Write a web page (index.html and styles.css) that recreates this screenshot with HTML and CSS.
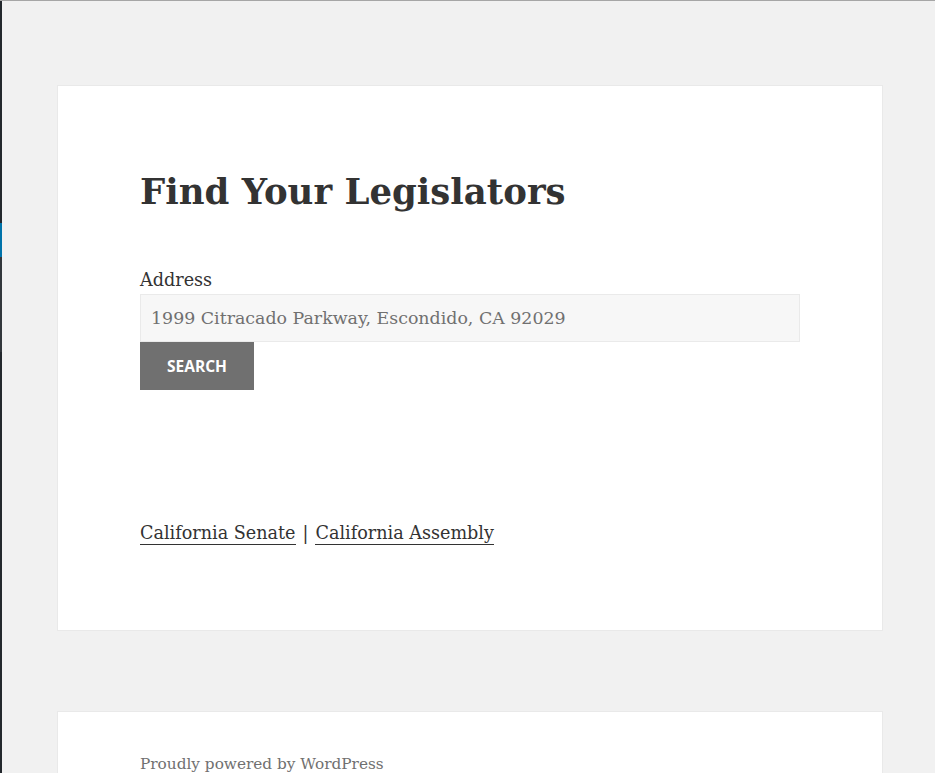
FILE: index.html
```html
<!DOCTYPE html>
<html>
<head>
<meta charset="utf-8">
<link rel="stylesheet" href="styles.css">
</head>
<body>
<div class="topline"></div>
<div class="frame">
  <div class="adminbar">
    <div class="seg-dark1"></div>
    <div class="seg-blue"></div>
    <div class="seg-dark2"></div>
    <div class="seg-dark3"></div>
  </div>
  <div class="main">
    <article class="card">
      <h1 class="title">Find Your Legislators</h1>
      <form class="search-form">
        <label class="label" for="addr">Address</label>
        <input class="addr" id="addr" type="text" placeholder="1999 Citracado Parkway, Escondido, CA 92029">
        <button class="btn" type="button">Search</button>
      </form>
      <p class="links"><a class="link" href="#">California Senate</a><span class="sep">|</span><a class="link" href="#">California Assembly</a></p>
    </article>
    <footer class="card footer">
      <p class="powered">Proudly powered by WordPress</p>
    </footer>
  </div>
</div>
</body>
</html>
```
FILE: styles.css
```css
html, body {
  margin: 0;
  padding: 0;
  height: 100%;
  overflow: hidden;
}
body {
  background: #f1f1f1;
  font-family: "DejaVu Serif", serif;
  color: #333;
}
.topline {
  height: 1px;
  background: #a6a6a6;
}
.frame {
  display: flex;
  min-height: 772px;
}
.adminbar {
  width: 2px;
  display: flex;
  flex-direction: column;
  background: #23282d;
}
.seg-dark1 { height: 222px; background: #23282d; }
.seg-blue { height: 34px; background: #0073aa; }
.seg-dark2 { height: 95px; background: #32373c; }
.seg-dark3 { flex: 1; background: #23282d; }
.main {
  margin-left: 55px;
  padding-top: 84px;
  width: 826px;
}
.card {
  background: #fff;
  border: 1px solid #e9e9e9;
  box-sizing: border-box;
  width: 826px;
  padding: 82px 82px 83px 82px;
}
.title {
  margin: 0;
  font-family: "DejaVu Serif", serif;
  font-weight: 700;
  font-size: 35.5px;
  line-height: 48px;
  color: #333;
}
.search-form {
  margin-top: 50px;
  display: flex;
  flex-direction: column;
  align-items: flex-start;
}
.label {
  font-size: 17.6px;
  line-height: 28px;
  color: #333;
}
.addr {
  box-sizing: border-box;
  width: 660px;
  height: 48px;
  margin: 0;
  padding: 0 10px;
  background: #f7f7f7;
  border: 1px solid #eaeaea;
  font-family: "DejaVu Serif", serif;
  font-size: 17.4px;
  color: #707070;
  outline: none;
}
.addr::placeholder {
  color: #707070;
  opacity: 1;
}
.btn {
  width: 114px;
  height: 48px;
  margin: 0;
  border: 0;
  background: #707070;
  color: #fff;
  font-family: "Open Sans", "Noto Sans", sans-serif;
  font-weight: 700;
  font-size: 15.5px;
  text-transform: uppercase;
  letter-spacing: 0;
  padding: 0;
}
.links {
  margin: 129px 0 0 0;
  font-size: 17.6px;
  line-height: 28px;
}
.link {
  color: #333;
  text-decoration: none;
  border-bottom: 1px solid #333;
  padding-bottom: 1px;
}
.sep {
  margin: 0 7px;
}
.footer {
  margin-top: 80px;
  padding-top: 38px;
  padding-bottom: 40px;
}
.powered {
  margin: 0;
  font-size: 15.3px;
  line-height: 28px;
  color: #707070;
}
```
